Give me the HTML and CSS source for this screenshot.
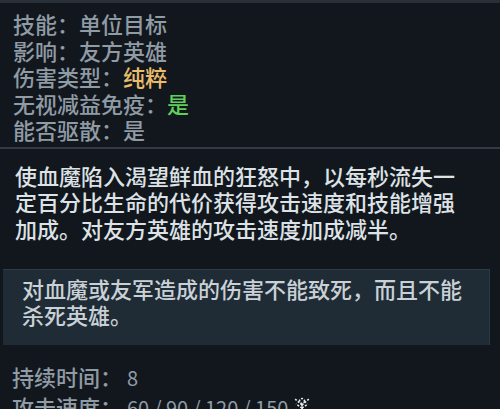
FILE: index.html
```html
<!DOCTYPE html>
<html lang="zh-CN">
<head>
<meta charset="utf-8">
<link rel="stylesheet" href="styles.css">
</head>
<body>
<div class="panel">
  <div class="attrs">
    <div class="row">技能：单位目标</div>
    <div class="row">影响：友方英雄</div>
    <div class="row">伤害类型：<span class="gold">纯粹</span></div>
    <div class="row">无视减益免疫：<span class="green">是</span></div>
    <div class="row">能否驱散：是</div>
  </div>
  <div class="sep"></div>
  <p class="desc">使血魔陷入渴望鲜血的狂怒中，以每秒流失一定百分比生命的代价获得攻击速度和技能增强加成。对友方英雄的攻击速度加成减半。</p>
  <div class="note">对血魔或友军造成的伤害不能致死，而且不能杀死英雄。</div>
  <div class="stats">
    <div class="row">持续时间： <span class="num">8</span></div>
    <div class="row">攻击速度： <span class="num">60 / 90 / 120 / 150</span><svg class="scepter" width="24" height="24" viewBox="0 0 24 24"><g fill="none" stroke="#e8ecef" stroke-width="1.6" stroke-dasharray="2 1.5"><path d="M12 22V10"/><path d="M12 10L5 4"/><path d="M12 10L19 4"/><path d="M12 13L6 9"/><path d="M12 13L18 9"/><circle cx="12" cy="6" r="2.5"/></g></svg></div>
  </div>
</div>
</body>
</html>
```

FILE: styles.css
```css
html, body {
  margin: 0;
  padding: 0;
  background: #12171d;
}
body {
  width: 500px;
  height: 409px;
  overflow: hidden;
  font-family: "Noto Sans CJK SC", "Noto Sans", sans-serif;
  font-weight: 500;
}
.panel {
  border-top: 3px solid #2a3037;
}
.attrs {
  padding: 7px 13px 0;
  font-size: 22px;
  line-height: 26.5px;
  color: #8f9ba5;
}
.row {
  white-space: nowrap;
}
.gold {
  color: #e9bd6c;
}
.green {
  color: #5fcf5c;
}
.sep {
  margin-top: 4px;
  height: 2px;
  background: #343a41;
}
.desc {
  margin: 0;
  padding: 13px 40px 0 15px;
  font-size: 22px;
  line-height: 26.5px;
  color: #dde2e6;
}
.note {
  margin: 28px 10px 0 3px;
  padding: 6px 20px 18px 19px;
  background: #1f2c36;
  border-top: 1px solid #2c3b46;
  border-right: 1px solid #2a3843;
  font-size: 22px;
  line-height: 25.5px;
  color: #c9d1d7;
}
.stats {
  margin-top: 17px;
  padding: 0 12px;
  font-size: 22px;
  line-height: 28px;
  color: #8f9ba5;
}
.num {
  font-size: 20px;
  font-weight: 400;
}
.scepter {
  vertical-align: -3px;
  margin-left: 2px;
}
```
